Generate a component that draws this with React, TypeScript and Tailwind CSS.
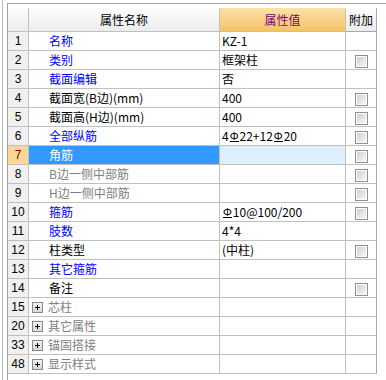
import React from "react";

type Tone = "blue" | "black" | "gray" | "selected";

type Row = {
  n: number;
  name: string;
  tone: Tone;
  value?: string;
  check?: boolean;
  group?: boolean;
};

const rows: Row[] = [
  { n: 1, name: "名称", tone: "blue", value: "KZ-1" },
  { n: 2, name: "类别", tone: "blue", value: "框架柱", check: true },
  { n: 3, name: "截面编辑", tone: "blue", value: "否" },
  { n: 4, name: "截面宽(B边)(mm)", tone: "black", value: "400", check: true },
  { n: 5, name: "截面高(H边)(mm)", tone: "black", value: "400", check: true },
  { n: 6, name: "全部纵筋", tone: "blue", value: "4Φ22+12Φ20", check: true },
  { n: 7, name: "角筋", tone: "selected", check: true },
  { n: 8, name: "B边一侧中部筋", tone: "gray", check: true },
  { n: 9, name: "H边一侧中部筋", tone: "gray", check: true },
  { n: 10, name: "箍筋", tone: "blue", value: "Φ10@100/200", check: true },
  { n: 11, name: "肢数", tone: "blue", value: "4*4" },
  { n: 12, name: "柱类型", tone: "black", value: "(中柱)", check: true },
  { n: 13, name: "其它箍筋", tone: "blue" },
  { n: 14, name: "备注", tone: "black", check: true },
  { n: 15, name: "芯柱", tone: "gray", group: true },
  { n: 20, name: "其它属性", tone: "gray", group: true },
  { n: 33, name: "锚固搭接", tone: "gray", group: true },
  { n: 48, name: "显示样式", tone: "gray", group: true },
];

const toneText: Record<Tone, string> = {
  blue: "text-[#0000ff]",
  black: "text-black",
  gray: "text-[#808080]",
  selected: "text-white",
};

function Value({ text }: { text: string }) {
  const parts = text.split("Φ");
  return (
    <>
      {parts.map((p, i) => (
        <React.Fragment key={i}>
          {i > 0 && (
            <span className="mx-[1px] inline-block border-b border-black text-[11px] leading-[11px]">
              Φ
            </span>
          )}
          {p}
        </React.Fragment>
      ))}
    </>
  );
}

function Checkbox() {
  return (
    <span className="mt-[2px] flex h-[13px] w-[13px] border border-[#8e8f8f] bg-white p-[1px]">
      <span className="h-full w-full bg-gradient-to-br from-[#cfd0d2] to-[#f7f7f7]" />
    </span>
  );
}

function PlusBox() {
  return (
    <svg width="11" height="11" viewBox="0 0 11 11" className="shrink-0">
      <defs>
        <linearGradient id="pb" x1="0" y1="0" x2="0" y2="1">
          <stop offset="0" stopColor="#f4f4f4" />
          <stop offset="1" stopColor="#d6d6d6" />
        </linearGradient>
      </defs>
      <rect x="0.5" y="0.5" width="10" height="10" fill="url(#pb)" stroke="#8a8a8a" />
      <path d="M3 5.5h5M5.5 3v5" stroke="#000" strokeWidth="1" />
    </svg>
  );
}

const cell = "border-r border-b border-[#c0c0c0] h-[19px] flex items-center";

export default function App() {
  return (
    <div className="h-[380px] w-[386px] overflow-hidden bg-white pl-[2px] font-['Noto_Sans_CJK_SC',sans-serif] text-[12px] leading-none">
      <div className="h-full border-l border-[#b8b8b8] pl-[4px] pt-[3px]">
        <div className="h-full border-l border-t border-[#a0a0a0] pt-[4px]">
          <div className="grid w-[369px] grid-cols-[21px_191px_126px_31px]">
            {/* header */}
            <div className="h-[24px] border-r border-b border-[#c0c0c0] bg-gradient-to-b from-[#fdfdfd] to-[#ececec]" />
            <div className="flex h-[24px] items-center justify-center border-r border-b border-[#c0c0c0] bg-gradient-to-b from-[#fdfdfd] to-[#ececec] text-black">
              属性名称
            </div>
            <div className="flex h-[24px] items-center justify-center border-r border-b border-[#c0c0c0] bg-gradient-to-b from-[#fce2a8] to-[#f4c262] text-[#800080]">
              属性值
            </div>
            <div className="flex h-[24px] items-center justify-center border-r border-b border-[#a8a8a8] bg-gradient-to-b from-[#fdfdfd] to-[#ececec] text-black">
              附加
            </div>

            {rows.map((r) => {
              const sel = r.tone === "selected";
              return (
                <React.Fragment key={r.n}>
                  <div
                    className={`${cell} justify-center font-['Liberation_Sans',sans-serif] ${
                      sel ? "bg-[#fdd596] text-[#800000]" : "bg-[#f0f0f0] text-black"
                    }`}
                  >
                    {r.n}
                  </div>
                  <div
                    className={`${cell} ${r.group ? "gap-[5px] pl-[3px]" : "pl-[20px]"} ${
                      sel ? "bg-[#3399ff]" : "bg-white"
                    } ${toneText[r.tone]}`}
                  >
                    {r.group && <PlusBox />}
                    {r.name}
                  </div>
                  <div className={`${cell} pl-[2px] text-black ${sel ? "bg-[#ddeeff]" : "bg-white"}`}>
                    {r.value && <Value text={r.value} />}
                  </div>
                  <div className={`${cell} justify-center border-r-[#a8a8a8] bg-white`}>
                    {r.check && <Checkbox />}
                  </div>
                </React.Fragment>
              );
            })}
          </div>
        </div>
      </div>
    </div>
  );
}
